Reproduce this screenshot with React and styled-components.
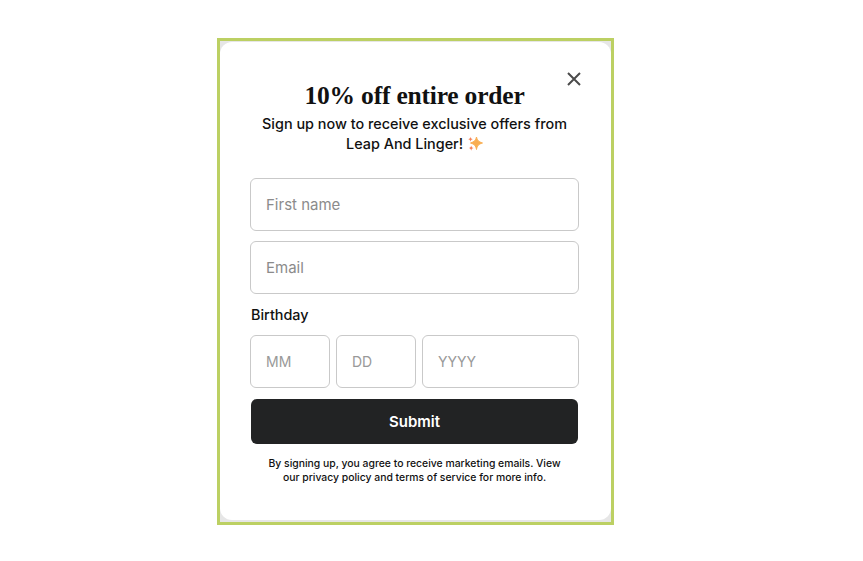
import React from "react";
import styled, { createGlobalStyle } from "styled-components";

const Global = createGlobalStyle`
  html, body { margin: 0; padding: 0; background: #fff; }
  body { font-family: Inter, "Noto Sans", sans-serif; }
  * { box-sizing: border-box; }
`;
const Page = styled.div`
  width: 863px; height: 561px; padding: 38px 0 0 217px; overflow: hidden;
`;
const Frame = styled.div`
  width: 397px; height: 487px; border: 3px solid #bcd063; background: #e6e6e6;
  padding: 1px 0 0 0;
`;
const Card = styled.div`
  position: relative; height: 478px; background: #fff; border-radius: 12px;
  padding: 40px 32px 0 30px; display: flex; flex-direction: column; align-items: center;
`;
const Close = styled.button`
  position: absolute; top: 29px; right: 29px; width: 16px; height: 16px; padding: 0;
  background: none; border: 0; color: #4b4b4b; display: flex;
`;
const Title = styled.h1`
  margin: 0; font: 700 25.5px/28px "Liberation Serif", serif; color: #111;
  letter-spacing: -0.2px; white-space: nowrap;
`;
const Sub = styled.p`
  margin: 4px 0 0; width: 329px; text-align: center; font-size: 14.4px; line-height: 20px; color: #111; font-weight: 500;
`;
const Form = styled.div`
  margin-top: 24px; width: 329px; display: flex; flex-direction: column; gap: 10px;
`;
const Field = styled.div`
  height: 53px; flex: ${p => p.$flex || "none"}; border: 1px solid #c9c9c9; border-radius: 6px; padding: 0 15px;
  display: flex; align-items: center; font-size: ${p => (p.$flex ? "14px" : "15px")}; color: ${p => (p.$flex ? "#999" : "#8b8b8b")};
  min-width: 0;
`;
const Label = styled.div`
  margin: 0 0 1px 1px; font-size: 14.4px; line-height: 21px; font-weight: 500; color: #111; height: 21px;
`;
const DateRow = styled.div`
  display: flex; gap: 6px; margin-top: -1px;
`;
const Submit = styled.button`
  margin: 1px 1px 0; height: 45px; background: #222324; border: 0; border-radius: 6px; color: #fff;
  font: 600 15px Inter, sans-serif;
`;
const Note = styled.p`
  margin: 13px 0 0; width: 300px; text-align: center; font-size: 10.4px; line-height: 14px; color: #111; font-weight: 500;
`;

export default function App() {
  return (
    <Page>
      <Global />
      <Frame>
        <Card>
          <Close aria-label="Close">
            <svg width="16" height="16" viewBox="0 0 16 16" fill="none" stroke="currentColor" strokeWidth="2">
              <path d="M2 2 14 14M14 2 2 14" />
            </svg>
          </Close>
          <Title>10% off entire order</Title>
          <Sub>Sign up now to receive exclusive offers from Leap And Linger! <svg width="16" height="16" viewBox="0 0 16 16" style={{ verticalAlign: "-3px" }}>
            <path d="M9.500 1C10.200 4.300 11.500 5.700 15.500 7 11.500 8.100 10.100 9.700 9.500 13.500 8.900 9.700 7.500 8.100 3.500 7 7.500 5.700 8.800 4.300 9.500 1Z" fill="#f9ae52" strokeWidth="1" stroke="#f9ae52" />
            <path d="M3.500 .8c.3 1.500.9 2 2.300 2.500-1.400.4-2 1-2.300 2.500-.3-1.500-.9-2.100-2.300-2.500C2.600 2.800 3.200 2.300 3.500 .8ZM4.200 9.500c.3 1.500 1 2.200 2.500 2.600-1.500.4-2.200 1.100-2.500 2.600-.3-1.500-1-2.200-2.500-2.600 1.500-.4 2.200-1.100 2.500-2.600Z" fill="#f5835a" />
          </svg></Sub>
          <Form>
            <Field>First name</Field>
            <Field>Email</Field>
            <Label>Birthday</Label>
            <DateRow>
              <Field $flex="0 0 80px">MM</Field>
              <Field $flex="0 0 80px">DD</Field>
              <Field $flex="1">YYYY</Field>
            </DateRow>
            <Submit>Submit</Submit>
          </Form>
          <Note>By signing up, you agree to receive marketing emails. View our privacy policy and terms of service for more info.</Note>
        </Card>
      </Frame>
    </Page>
  );
}
